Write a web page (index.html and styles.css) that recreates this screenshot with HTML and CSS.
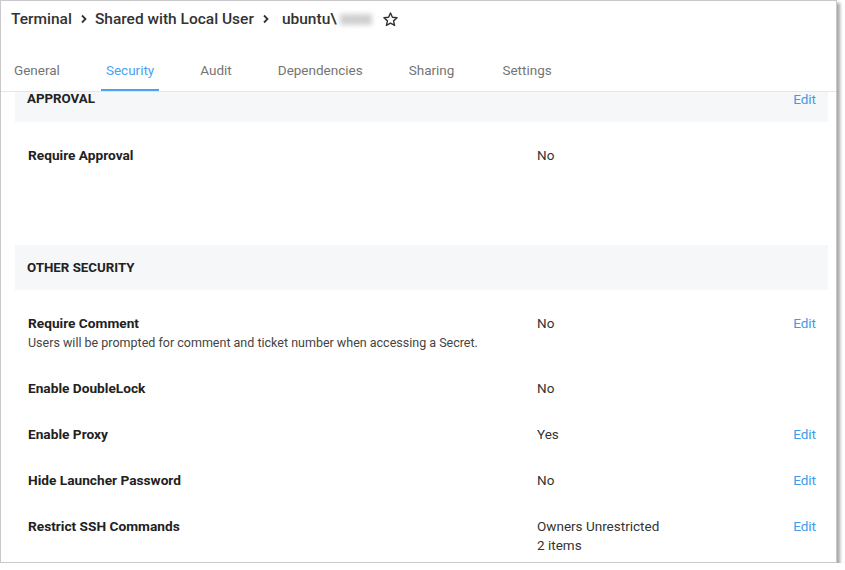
FILE: index.html
```html
<!DOCTYPE html>
<html>
<head>
<meta charset="utf-8">
<link rel="stylesheet" href="styles.css">
</head>
<body>
<div class="window">
  <div class="crumbs">
    <span class="crumb">Terminal</span>
    <svg class="chev" width="10" height="10" viewBox="0 0 10 10"><path d="M3 1.5 L6.5 5 L3 8.5" fill="none" stroke="#333" stroke-width="1.8"/></svg>
    <span class="crumb">Shared with Local User</span>
    <svg class="chev" width="10" height="10" viewBox="0 0 10 10"><path d="M3 1.5 L6.5 5 L3 8.5" fill="none" stroke="#333" stroke-width="1.8"/></svg>
    <span class="crumb last">ubuntu\<span class="redact"></span></span>
    <svg class="star" width="17" height="17" viewBox="0 0 24 24"><path d="M12 2.8 L14.7 8.9 L21.3 9.5 L16.3 13.9 L17.8 20.4 L12 17 L6.2 20.4 L7.7 13.9 L2.7 9.5 L9.3 8.9 Z" fill="none" stroke="#333" stroke-width="2" stroke-linejoin="round"/></svg>
  </div>
  <div class="tabs">
    <span class="tab">General</span>
    <span class="tab active">Security</span>
    <span class="tab">Audit</span>
    <span class="tab">Dependencies</span>
    <span class="tab">Sharing</span>
    <span class="tab">Settings</span>
  </div>
  <div class="content">
    <div class="scroller">
      <section class="section approval">
        <div class="sec-head"><span class="sec-title">APPROVAL</span><span class="edit">Edit</span></div>
        <div class="rows">
          <div class="row"><div class="label">Require Approval</div><div class="value">No</div><div class="action"></div></div>
        </div>
      </section>
      <section class="section">
        <div class="sec-head"><span class="sec-title">OTHER SECURITY</span></div>
        <div class="rows">
          <div class="row"><div class="label">Require Comment<div class="desc">Users will be prompted for comment and ticket number when accessing a Secret.</div></div><div class="value">No</div><div class="action"><span class="edit">Edit</span></div></div>
          <div class="row"><div class="label">Enable DoubleLock</div><div class="value">No</div><div class="action"></div></div>
          <div class="row"><div class="label">Enable Proxy</div><div class="value">Yes</div><div class="action"><span class="edit">Edit</span></div></div>
          <div class="row"><div class="label">Hide Launcher Password</div><div class="value">No</div><div class="action"><span class="edit">Edit</span></div></div>
          <div class="row"><div class="label">Restrict SSH Commands</div><div class="value">Owners Unrestricted<div class="sub">2 items</div></div><div class="action"><span class="edit">Edit</span></div></div>
        </div>
      </section>
    </div>
  </div>
</div>
</body>
</html>
```
FILE: styles.css
```css
* { box-sizing: border-box; }
html, body { margin: 0; padding: 0; background: #fff; }
body { font-family: Roboto, "Liberation Sans", sans-serif; color: #333; }
.window {
  width: 837px;
  height: 563px;
  border: 1px solid #c9c9c9;
  box-shadow: 3px 3px 3px rgba(0,0,0,0.35);
  background: #fff;
  overflow: hidden;
  display: flex;
  flex-direction: column;
}
.crumbs {
  display: flex;
  align-items: center;
  height: 36px;
  padding: 0 0 0 10px;
  font-size: 15.5px;
  font-weight: 500;
  color: #333;
}
.chev { margin: 0 6px 0 7px; }
.crumb.last { display: inline-flex; align-items: center; margin-left: 5px; }
.redact {
  display: inline-block;
  width: 32px;
  height: 11px;
  margin-left: 3px;
  background: #d0d0d0;
  filter: blur(2.5px);
}
.star { margin-left: 10px; }
.tabs {
  display: flex;
  gap: 36px;
  height: 55px;
  padding: 0 0 0 8px;
  align-items: stretch;
  border-bottom: 1px solid #e4e6ea;
}
.tab {
  display: flex;
  align-items: center;
  padding: 0 5px;
  font-size: 13.5px;
  color: #757575;
  border-bottom: 2px solid transparent;
  padding-top: 13px;
}
.tab:last-child { margin-left: 2px; }
.tab.active { color: #4aa3f0; border-bottom-color: #4aa3f0; }
.content { flex: 1; overflow: hidden; padding: 0 8px 0 14px; }
.scroller { margin-top: -15px; }
.sec-head {
  display: flex;
  justify-content: space-between;
  align-items: center;
  height: 45px;
  padding: 0 12px 0 12px;
  background: #f6f7f9;
  line-height: 1;
}
.approval .sec-head { padding-bottom: 2px; }
.sec-head .edit { line-height: 12px; }
.sec-title { font-size: 13.3px; font-weight: 700; color: #222; }
.edit { font-size: 13.5px; color: #3d9be9; }
.rows { padding-top: 10px; }
.approval { margin-bottom: 67px; }
.row {
  display: grid;
  grid-template-columns: 509px 1fr 60px;
  padding: 13px 12px 13px 13px;
  font-size: 13.5px;
  line-height: 20px;
}
.label { font-weight: 700; color: #222; font-size: 13.7px; }
.desc { font-weight: 400; font-size: 12.5px; line-height: 19px; color: #444; }
.value { color: #333; }
.sub { line-height: 19px; }
.action { text-align: right; }
```
